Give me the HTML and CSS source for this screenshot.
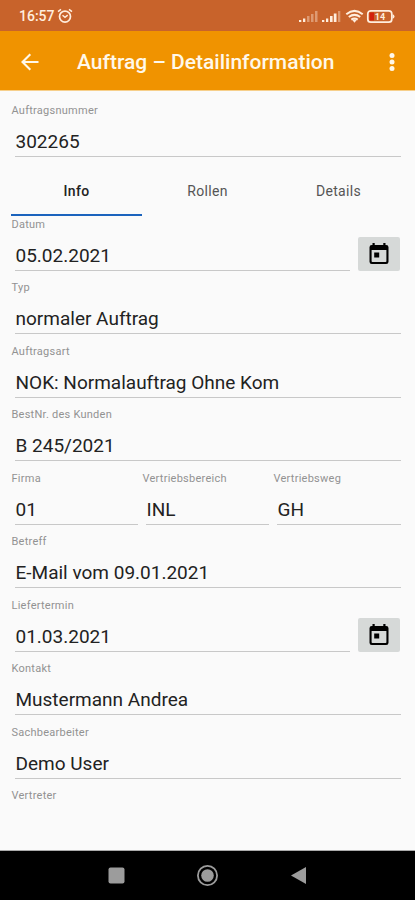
FILE: index.html
```html
<!DOCTYPE html>
<html lang="de">
<head>
<meta charset="utf-8">
<title>Auftrag – Detailinformation</title>
<link rel="stylesheet" href="styles.css">
</head>
<body>
<div class="status">
  <span class="clock">16:57</span>
  <svg class="alarm" width="16" height="16" viewBox="0 0 16 16" fill="none" stroke="currentColor"><circle cx="8" cy="8.6" r="5.5" stroke-width="1.7"/><path d="M1 3.7 4 1.3M15 3.7l-3-2.4M5.5 7.3 8 9.4l2.7-2.2" stroke-width="1.5"/></svg>
  <svg class="indicators" width="98" height="16" viewBox="0 0 98 16" fill="currentColor">
    <path d="M0 12h2.300v2H0zM4 10.500h2.300V14H4z"/><path opacity=".4" d="M8 8h2.500v6H8zM12 6h2.500v8H12zM16 3h2.500v11H16z"/>
    <path d="M23 12h2.300v2H23zM27 10.500h2.300V14H27zM31 8h2.600v6H31zM34.800 5.500h2.700V14h-2.700z"/><path opacity=".4" d="M39 3h2.300v11H39z"/>
    <g fill="none" stroke="currentColor" stroke-width="2"><path d="M47.300 6.200q8.200-6.600 16.400 0M49.800 9q5.700-4.300 11.400 0M52.300 11.600q3.200-2.300 6.400 0"/></g><path d="m53.300 12 2.200 2.700 2.200-2.700q-2.200-1.500-4.400 0z"/>
    <rect x="68.800" y="2.800" width="24" height="11.400" rx="3" fill="none" stroke="currentColor" stroke-width="1.700"/><path d="M93.500 6.300q2 .4 2 2.200t-2 2.200z"/>
    <path fill="#d3200c" d="M70.500 4.500h4.500v8h-4.500z"/>
    <text class="charge" x="75.800" y="12">14</text>
  </svg>
</div>
<header class="appbar">
  <svg class="back" width="20" height="20" viewBox="0 0 20 20" fill="none" stroke="currentColor" stroke-width="2.100"><path d="M18.500 10H3M10.300 2.200 2.500 10l7.800 7.800"/></svg>
  <h1>Auftrag – Detailinformation</h1>
  <svg class="more" width="6" height="20" viewBox="0 0 6 20" fill="currentColor"><circle cx="3" cy="3.500" r="2.500"/><circle cx="3" cy="10" r="2.500"/><circle cx="3" cy="16.500" r="2.500"/></svg>
</header>
<main>
  <div class="field first"><label>Auftragsnummer</label><div class="value">302265</div></div>
  <nav><span class="tab active">Info</span><span class="tab">Rollen</span><span class="tab">Details</span></nav>
  <div class="with-button">
    <div class="field"><label>Datum</label><div class="value">05.02.2021</div></div>
    <button aria-label="Datum"><svg width="22" height="24" viewBox="0 0 22 24"><path fill-rule="evenodd" d="M4.500 1h2.200v2h8.600V1h2.200v2h.7q2.300 0 2.300 2.300v14.400q0 2.300-2.300 2.300H3.800q-2.300 0-2.300-2.300V5.300Q1.500 3 3.800 3h.7zM3.600 8v11.200q0 .8.800.8h13.200q.8 0 .8-.8V8zM6.200 10.500h5v5h-5z"/></svg></button>
  </div>
  <div class="field"><label>Typ</label><div class="value">normaler Auftrag</div></div>
  <div class="field"><label>Auftragsart</label><div class="value">NOK: Normalauftrag Ohne Kom</div></div>
  <div class="field"><label>BestNr. des Kunden</label><div class="value">B 245/2021</div></div>
  <div class="triple">
    <div class="field"><label>Firma</label><div class="value">01</div></div>
    <div class="field"><label>Vertriebsbereich</label><div class="value">INL</div></div>
    <div class="field"><label>Vertriebsweg</label><div class="value">GH</div></div>
  </div>
  <div class="field"><label>Betreff</label><div class="value">E-Mail vom 09.01.2021</div></div>
  <div class="with-button">
    <div class="field"><label>Liefertermin</label><div class="value">01.03.2021</div></div>
    <button aria-label="Liefertermin"><svg width="22" height="24" viewBox="0 0 22 24"><path fill-rule="evenodd" d="M4.500 1h2.200v2h8.600V1h2.200v2h.7q2.300 0 2.300 2.300v14.400q0 2.300-2.300 2.300H3.800q-2.300 0-2.300-2.300V5.300Q1.500 3 3.800 3h.7zM3.600 8v11.200q0 .8.800.8h13.200q.8 0 .8-.8V8zM6.200 10.500h5v5h-5z"/></svg></button>
  </div>
  <div class="field"><label>Kontakt</label><div class="value">Mustermann Andrea</div></div>
  <div class="field"><label>Sachbearbeiter</label><div class="value">Demo User</div></div>
  <div class="field last"><label>Vertreter</label></div>
</main>
<footer>
  <svg width="415" height="49" viewBox="0 0 415 49" fill="#9c9c9c"><rect x="108.500" y="16.500" width="16" height="16" rx="2"/><circle cx="207.500" cy="24.500" r="6.300"/><circle cx="207.500" cy="24.500" r="9.600" fill="none" stroke="#9c9c9c" stroke-width="1.800"/><path d="M291 24.500 306 16v17z"/></svg>
</footer>
</body>
</html>
```
FILE: styles.css
```css
* { box-sizing: border-box; }
body {
  margin: 0;
  width: 415px;
  height: 900px;
  overflow: hidden;
  display: flex;
  flex-direction: column;
  background: #fafafa;
  font-family: Roboto, sans-serif;
  color: #222;
}
svg { display: block; flex: none; }
.status {
  height: 31px;
  flex: none;
  display: flex;
  align-items: center;
  padding: 1px 18px 0 19px;
  background: #c8632b;
  color: #ffeede;
}
.clock { font-size: 14px; font-weight: 500; width: 38px; }
.indicators { margin-left: auto; }
.charge { font-size: 9px; font-weight: 700; }
.appbar {
  height: 59px;
  flex: none;
  display: flex;
  align-items: center;
  padding: 3px 20px 0;
  background: #f09300;
  color: #fff8ea;
  box-shadow: 0 1px 0 #f6cf8b;
}
h1 { margin: 0 0 0 37px; font-size: 21px; font-weight: 500; line-height: 28px; white-space: nowrap; }
.more { margin-left: auto; }
main {
  flex: 1;
  min-height: 0;
  overflow: hidden;
  padding: 11.5px 11px 0;
}
.field { height: 63.5px; display: flex; flex-direction: column; }
label { height: 17px; padding-left: .5px; font-size: 11px; line-height: 17px; letter-spacing: .25px; color: #929292; white-space: nowrap; }
.value {
  height: 38px;
  margin-left: 4px;
  margin-right: 3px;
  padding: 9px 0 0 .5px;
  border-bottom: 1px solid #c8c8c8;
  font-size: 19px;
  line-height: 28px;
  white-space: nowrap;
}
.first { height: 67px; }
nav { display: flex; height: 47px; }
.tab { width: 131px; padding-top: 10px; text-align: center; font-size: 14px; line-height: 24px; letter-spacing: .3px; color: #555; }
.active { color: #222; border-bottom: 2px solid #1b63bd; font-weight: 500; }
.with-button { display: flex; }
.with-button .field { width: 342px; }
button {
  width: 42px;
  height: 34px;
  margin: 21px 0 0 5px;
  padding: 0;
  border: 0;
  border-radius: 2px;
  background: #d6d9d8;
  display: flex;
  align-items: center;
  justify-content: center;
}
.triple { display: grid; grid-template-columns: 131px 131px 131px; }
.triple .value { margin-right: 4px; }
.triple .field:last-child .value { margin-right: 3px; }
footer { height: 49px; flex: none; background: #000; box-shadow: 0 -1px 0 #aaa; }
```
